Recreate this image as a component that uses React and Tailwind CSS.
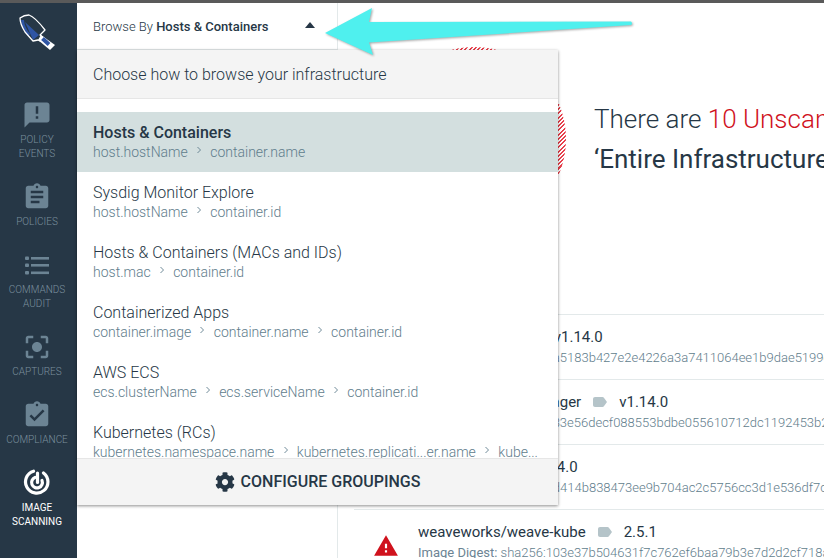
import React from "react";
import { FaCog } from "react-icons/fa";

const navItems = [
    { label: ["POLICY", "EVENTS"], height: "h-[82px]", icon: "M20 2H4c-1.1 0-1.99.9-1.99 2L2 22l4-4h14c1.1 0 2-.9 2-2V4c0-1.1-.9-2-2-2zm-7 9h-2V5h2v6zm0 4h-2v-2h2v2z" },
    { label: ["POLICIES"], height: "h-[68px]", icon: "M19 3h-4.18C14.4 1.84 13.3 1 12 1c-1.3 0-2.4.84-2.82 2H5c-1.1 0-2 .9-2 2v14c0 1.1.9 2 2 2h14c1.1 0 2-.9 2-2V5c0-1.1-.9-2-2-2zm-7 0c.55 0 1 .45 1 1s-.45 1-1 1-1-.45-1-1 .45-1 1-1zm2 14H7v-2h7v2zm3-4H7v-2h10v2zm0-4H7V7h10v2z" },
    { label: ["COMMANDS", "AUDIT"], height: "h-[82px]", list: true },
    { label: ["CAPTURES"], height: "h-[68px]", icon: "M12 8c-2.21 0-4 1.79-4 4s1.79 4 4 4 4-1.79 4-4-1.79-4-4-4zm-7 7H3v4c0 1.1.9 2 2 2h4v-2H5v-4zM5 5h4V3H5c-1.1 0-2 .9-2 2v4h2V5zm14-2h-4v2h4v4h2V5c0-1.1-.9-2-2-2zm0 16h-4v2h4c1.1 0 2-.9 2-2v-4h-2v4z" },
    { label: ["COMPLIANCE"], height: "h-[68px]", icon: "M19 3h-4.18C14.4 1.84 13.3 1 12 1c-1.3 0-2.4.84-2.82 2H5c-1.1 0-2 .9-2 2v14c0 1.1.9 2 2 2h14c1.1 0 2-.9 2-2V5c0-1.1-.9-2-2-2zm-7 0c.55 0 1 .45 1 1s-.45 1-1 1-1-.45-1-1 .45-1 1-1zm-2 14l-4-4 1.41-1.41L10 14.17l6.59-6.59L18 9l-8 8z" },
];

const groupings = [
    { name: "Hosts & Containers", path: ["host.hostName", "container.name"], active: true },
    { name: "Sysdig Monitor Explore", path: ["host.hostName", "container.id"] },
    { name: "Hosts & Containers (MACs and IDs)", path: ["host.mac", "container.id"] },
    { name: "Containerized Apps", path: ["container.image", "container.name", "container.id"] },
    { name: "AWS ECS", path: ["ecs.clusterName", "ecs.serviceName", "container.id"] },
    { name: "Kubernetes (RCs)", path: ["kubernetes.namespace.name", "kubernetes.replicati...er.name", "kube..."] },
];

const images = [
    { name: "kube-apiserver", tag: "v1.14.0", digest: "sha256:9a5183b427e2e4226a3a7411064ee1b9dae5199e3f1a2b7c" },
    { name: "kube-controller-manager", tag: "v1.14.0", digest: "sha256:a33e56decf088553bdbe055610712dc1192453b2a8c1d4e7" },
    { name: "kube-proxy", tag: "v1.14.0", digest: "sha256:7d414b838473ee9b704ac2c5756cc3d1e536df7c0a9b2f41" },
    { name: "weaveworks/weave-kube", tag: "2.5.1", digest: "sha256:103e37b504631f7c762ef6baa79b3e7d2d2cf718a6c3e90" },
];

const Logo = () => (
    <svg viewBox="0 0 50 48" className="w-[50px] h-[48px]" strokeLinejoin="round">
        <path d="M13 14 L27 27 L21 32 Z" fill="#2f55a4" />
        <path d="M10.5 12 Q11 20 17 27" fill="none" stroke="#2f55a4" strokeWidth="3" />
        <path d="M8 10 Q12 7 17 7 Q23 9 33 22 L28 27 L32 30 L28 33 L26 32 L21 33 L13 24 Q8 16 8 10 Z" fill="none" stroke="#fff" strokeWidth="1.3" />
        <path d="M29 27 L43 37 L38 42 L26 32" fill="#fff" />
        <path d="M30.5 30.5 L37 36.5" stroke="#2f55a4" strokeWidth="4" />
    </svg>
);

const ListIcon = () => (
    <svg viewBox="0 0 24 20" className="w-[24px] h-[20px]" fill="#6c8494">
        <rect x="0" y="1.5" width="4" height="3.5" rx="1" />
        <rect x="0" y="8.5" width="4" height="3.5" rx="1" />
        <rect x="0" y="16" width="4" height="3.5" rx="1" />
        <rect x="6" y="2" width="18" height="2.6" />
        <rect x="6" y="9" width="18" height="2.6" />
        <rect x="6" y="16.5" width="18" height="2.6" />
    </svg>
);

const ScanIcon = () => (
    <svg viewBox="0 0 28 28" className="w-[28px] h-[28px]" fill="none" stroke="#fff" strokeWidth="3.2" strokeLinecap="round">
        <path d="M10.5 3.2 A11.2 11.2 0 1 0 20.5 5" />
        <path d="M12 9.5 A5.4 5.4 0 1 0 19 12.5" />
        <path d="M14.5 14.5 L14.5 5" />
    </svg>
);

const Chevron = () => (
    <span className="w-[22.5px] flex justify-center -translate-y-[2px]">
        <svg viewBox="0 0 6 8" className="w-[6px] h-[8px]" fill="none" stroke="#5f7d8c" strokeWidth="0.9">
            <path d="M1.5 1 L4.5 4 L1.5 7" />
        </svg>
    </span>
);

const Sidebar = () => (
    <div className="w-[77px] shrink-0 bg-[#263746] pr-[3px] flex flex-col items-center">
        <div className="h-[87px] w-full flex justify-center pt-[5px]">
            <Logo />
        </div>
        {navItems.map((item) => (
            <div key={item.label[0]} className={`${item.height} w-full flex flex-col items-center pt-[9px]`}>
                <div className="h-[32px] flex items-center justify-center">
                    {item.list ? (
                        <ListIcon />
                    ) : (
                        <svg viewBox="0 0 24 24" className="w-[30px] h-[30px]" fill="#6c8494">
                            <path d={item.icon} />
                        </svg>
                    )}
                </div>
                <div className="mt-[2px] text-[10px] leading-[14px] font-light text-[#7b909e] text-center">
                    {item.label.map((line) => (
                        <div key={line}>{line}</div>
                    ))}
                </div>
            </div>
        ))}
        <div className="w-full flex flex-col items-center pt-[10px]">
            <ScanIcon />
            <div className="mt-[5px] text-[10px] leading-[14px] text-white text-center">
                <div>IMAGE</div>
                <div>SCANNING</div>
            </div>
        </div>
    </div>
);

const ImageRow = ({ image, last }) => (
    <div className="h-[65px] border-t border-[#e3e9ea] flex">
        <div className="w-[64px] shrink-0 flex items-center justify-center">
            {last && (
                <svg viewBox="0 0 24 24" className="w-[26px] h-[26px] mt-[8px]" fill="#d0121d">
                    <path d="M1 21h22L12 2 1 21zm12-3h-2v-2h2v2zm0-4h-2v-4h2v4z" />
                </svg>
            )}
        </div>
        <div className="pt-[12px] whitespace-nowrap">
            <div className="flex items-center text-[15px] leading-[20px] text-[#263746]">
                <span>{image.name}</span>
                <svg viewBox="0 0 14 10" className="w-[14px] h-[10px] mx-[12px]" fill="#b5c4c9">
                    <path d="M2 0h7.5c.6 0 1.1.3 1.4.7L14 5l-3.1 4.3c-.3.4-.8.7-1.4.7H2c-1.1 0-2-.9-2-2V2C0 .9.9 0 2 0z" />
                </svg>
                <span>{image.tag}</span>
            </div>
            <div className="text-[13px] leading-[20px] mt-[1px] font-light text-[#5f7d8c]">
                <span className="font-normal text-[#6c8494]">Image Digest:</span> {image.digest}
            </div>
        </div>
    </div>
);

const Dropdown = () => (
    <div className="absolute left-[77px] top-[50px] w-[481px] h-[455px] bg-white flex flex-col shadow-[0_1px_3px_rgba(0,0,0,0.45)]">
        <div className="h-[49px] shrink-0 bg-[#f4f4f4] border-b border-[#e6e6e6] px-4 pt-px flex items-center text-[16px] font-light text-[#263746]">
            Choose how to browse your infrastructure
        </div>
        <div className="flex-1 min-h-0 overflow-hidden pt-[13px]">
            {groupings.map((group) => (
                <div key={group.name} className={`h-[60px] px-4 pt-[11px] whitespace-nowrap ${group.active ? "bg-[#d3dfdf]" : ""}`}>
                    <div className={`text-[16px] leading-[20px] text-[#263746] ${group.active ? "font-medium" : "font-light"}`}>
                        {group.name}
                    </div>
                    <div className="-mt-px flex items-center text-[14px] leading-[20px] font-light text-[#5f7d8c]">
                        {group.path.map((part, i) => (
                            <React.Fragment key={part}>
                                {i > 0 && <Chevron />}
                                <span>{part}</span>
                            </React.Fragment>
                        ))}
                    </div>
                </div>
            ))}
        </div>
        <div className="h-[47px] shrink-0 bg-[#f4f4f4] border-t border-[#e6e6e6] flex items-center justify-center gap-[6px] text-[16px] font-medium text-[#263746]">
            <FaCog className="w-[20px] h-[20px]" />
            <span>CONFIGURE GROUPINGS</span>
        </div>
    </div>
);

const Arrow = () => (
    <svg viewBox="0 0 320 60" className="absolute left-[320px] top-0 w-[320px] h-[60px] drop-shadow-[1px_1px_1px_rgba(0,0,0,0.35)]">
        <path d="M5 33 L52 8 L49 22 L311 21.5 Q313 23.5 311 25 L49 42.5 L53 55 Z" fill="#4ff0ee" />
    </svg>
);

export default function App() {
    return (
        <div className="relative w-[824px] h-[558px] overflow-hidden bg-white font-['Roboto',sans-serif] flex flex-col">
            <div className="h-[3px] shrink-0 bg-[#5a5a5a]" />
            <div className="flex-1 min-h-0 flex">
                <Sidebar />
                <div className="w-[261px] shrink-0 border-r border-[#e3e9ea]">
                    <div className="h-[47px] border-b border-[#e3e9ea] pl-4 pr-[22px] pt-[2px] flex items-center justify-between text-[13px] text-[#263746]">
                        <span className="font-light">
                            Browse By <span className="font-medium">Hosts &amp; Containers</span>
                        </span>
                        <span className="w-0 h-0 border-x-[5px] border-x-transparent border-b-[6px] border-b-[#263746] -translate-y-[2px]" />
                    </div>
                </div>
                <div className="flex-1 min-w-0 overflow-hidden">
                    <div className="h-[311px] flex">
                        <div className="ml-[44px] mt-[44px] w-[184px] h-[184px] shrink-0 rounded-full bg-[repeating-linear-gradient(135deg,#e8404c_0,#e8404c_1.5px,#fff_1.5px,#fff_3px)]" />
                        <div className="ml-[28px] pt-[96px] whitespace-nowrap text-[26px] leading-[40px] text-[#263746]">
                            <div className="font-light">
                                There are <span className="text-[#d0121d]">10 Unscanned Images</span> in
                            </div>
                            <div>‘Entire Infrastructure’</div>
                        </div>
                    </div>
                    <div className="ml-[16px]">
                        {images.map((image, i) => (
                            <ImageRow key={image.name} image={image} last={i === images.length - 1} />
                        ))}
                    </div>
                </div>
            </div>
            <Dropdown />
            <Arrow />
        </div>
    );
}
